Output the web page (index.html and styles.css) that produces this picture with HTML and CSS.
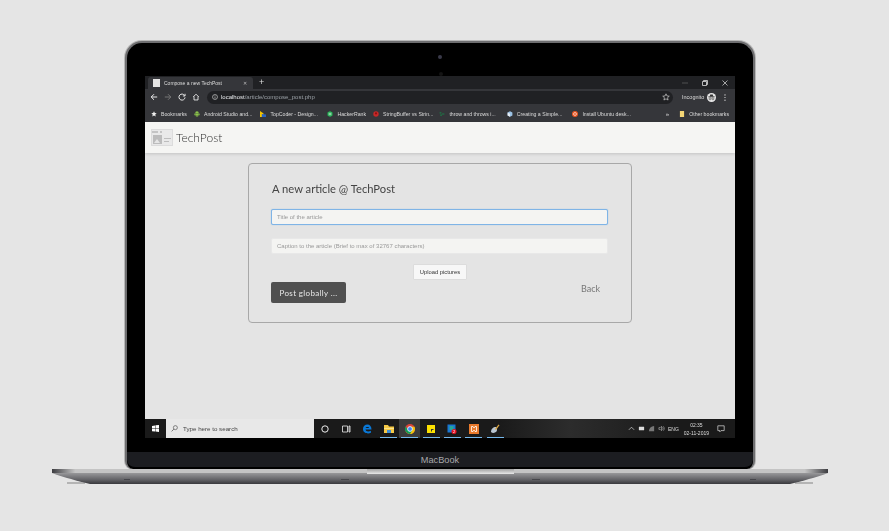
FILE: index.html
```html
<!DOCTYPE html>
<html lang="en">
<head>
  <meta charset="UTF-8">
  <title>Compose a new TechPost</title>
  <link rel="stylesheet" href="styles.css">
</head>
<body>
  <div class="lid">
    <div class="camera"></div>
    <div class="screen">

      <div class="tabstrip">
        <div class="tab">
          <span class="tab-favicon"></span>
          <span class="tab-title">Compose a new TechPost</span>
          <span class="tab-close">✕</span>
        </div>
        <span class="tab-new">+</span>
        <div class="window-btns">
          <svg width="6" height="6" viewBox="0 0 6 6"><path d="M0 3h6" stroke="#666" stroke-width=".7"/></svg>
          <svg width="6" height="6" viewBox="0 0 6 6"><path d="M.5 1.500h4v4h-4zM1.500 1.500v-1h4v4h-1" fill="none" stroke="#ddd" stroke-width=".8"/></svg>
          <svg width="6" height="6" viewBox="0 0 6 6"><path d="M.5.5l5 5M5.500.5l-5 5" stroke="#ddd" stroke-width=".7"/></svg>
        </div>
      </div>

      <div class="toolbar">
        <svg class="nav-icon" viewBox="0 0 10 10"><path d="M9 5H1.500M5 1.500L1.500 5 5 8.500" fill="none" stroke="#eee" stroke-width="1.200"/></svg>
        <svg class="nav-icon" viewBox="0 0 10 10"><path d="M1 5h7.500M5 1.500L8.500 5 5 8.500" fill="none" stroke="#777" stroke-width="1.200"/></svg>
        <svg class="nav-icon" viewBox="0 0 10 10"><path d="M8.300 3.200A3.800 3.800 0 1 0 8.800 5.500M8.800 1v2.700H6.100" fill="none" stroke="#eee" stroke-width="1.200"/></svg>
        <svg class="nav-icon" viewBox="0 0 10 10"><path d="M1.500 5L5 1.500 8.500 5M2.500 4.500v4.200h5V4.500" fill="none" stroke="#eee" stroke-width="1.100"/></svg>
        <div class="omnibox">
          <svg class="info-icon" viewBox="0 0 8 8"><circle cx="4" cy="4" r="3.300" fill="none" stroke="#ddd" stroke-width=".8"/><path d="M4 3.500v2.500M4 2v1" stroke="#ddd" stroke-width=".8"/></svg>
          <span class="url"><b>localhost</b>/article/compose_post.php</span>
          <svg class="star-icon" viewBox="0 0 10 10"><path d="M5 1l1.200 2.700 2.900.3-2.200 1.900.7 2.900L5 7.300 2.400 8.800l.7-2.900L.9 4l2.900-.3z" fill="none" stroke="#ddd" stroke-width=".8"/></svg>
        </div>
        <span class="incognito">Incognito</span>
        <svg class="incognito-icon" viewBox="0 0 10 10"><circle cx="5" cy="5" r="5" fill="#e8e8e8"/><path d="M1.500 4.300h7" stroke="#333" stroke-width="1"/><path d="M3 3.800l.6-2h2.800l.6 2z" fill="#333"/><circle cx="3.400" cy="6.500" r="1.100" fill="none" stroke="#333" stroke-width=".6"/><circle cx="6.600" cy="6.500" r="1.100" fill="none" stroke="#333" stroke-width=".6"/></svg>
        <svg class="menu-icon" viewBox="0 0 2 8"><circle cx="1" cy="1" r=".7" fill="#eee"/><circle cx="1" cy="4" r=".7" fill="#eee"/><circle cx="1" cy="7" r=".7" fill="#eee"/></svg>
      </div>

      <div class="bookmarks">
        <span class="mark"><svg viewBox="0 0 10 10"><path d="M5 .5l1.400 3 3.100.3-2.400 2.100.8 3.200L5 7.400 2.100 9.100l.8-3.200L.5 3.800l3.100-.3z" fill="#eee"/></svg>Bookmarks</span>
        <span class="mark mark-android"><svg viewBox="0 0 10 10"><path d="M2 4h6v3.500H2z" fill="#8bc34a"/><path d="M2 3.600a3 3 0 0 1 6 0z" fill="#8bc34a"/><path d="M3.200 7h1.200v2.500H3.200zM5.600 7h1.200v2.500H5.600zM.6 4h1v3h-1zM8.400 4h1v3h-1z" fill="#8bc34a"/></svg>Android Studio and...</span>
        <span class="mark mark-tc"><svg viewBox="0 0 10 10"><path d="M0 0l6 4v6H0z" fill="#f5c400"/><path d="M3 5l7 1v4H3z" fill="#2a63c4"/></svg>TopCoder - Design...</span>
        <span class="mark mark-hr"><svg viewBox="0 0 10 10"><path d="M5 0l4.300 2.500v5L5 10 .7 7.500v-5z" fill="#1ba94c"/><path d="M3.500 2.500v5M6.500 2.500v5M3.500 5h3" stroke="#fff" stroke-width=".9"/></svg>HackerRank</span>
        <span class="mark mark-sb"><svg viewBox="0 0 10 10"><circle cx="5" cy="5" r="4.500" fill="#c62828"/><circle cx="5" cy="4" r="1.800" fill="#8d1010"/></svg>StringBuffer vs Strin...</span>
        <span class="mark mark-th"><svg viewBox="0 0 10 10"><path d="M1 2h3v2H1zM5 4h4v2H5zM2 6h3v2H2z" fill="#1d7a46"/></svg>throw and throws i...</span>
        <span class="mark mark-cs"><svg viewBox="0 0 10 10"><path d="M5 .5l4 2v5l-4 2-4-2v-5z" fill="#9cc3e6"/><path d="M5 4.500v5L1 7.500v-5z" fill="#e6eef6"/></svg>Creating a Simple...</span>
        <span class="mark mark-ub"><svg viewBox="0 0 10 10"><circle cx="5" cy="5" r="5" fill="#e95420"/><circle cx="5" cy="5" r="2.400" fill="none" stroke="#fff" stroke-width="1"/></svg>Install Ubuntu desk...</span>
        <span class="more">»</span>
        <span class="mark mark-other"><svg viewBox="0 0 10 10"><path d="M1.500 0h7v10h-7z" fill="#f4d676"/></svg>Other bookmarks</span>
      </div>

      <header class="site-nav">
        <svg class="site-logo" viewBox="0 0 22 17">
          <path d="M0 0h22v17H0z" fill="#dcdcdc"/>
          <path d="M1 1h20v15H1z" fill="#e9e9e9"/>
          <path d="M1 2h6v2H1zM9 2h2v2H9z" fill="#c4c4c4"/>
          <path d="M2 6h9v9H2z" fill="#bcbcbc"/>
          <path d="M3 14l3-4 3 4z" fill="#e6e6e6"/>
          <path d="M13 9h7v1h-7zM13 12h5v1h-5z" fill="#bdbdbd"/>
        </svg>
        <span class="site-name">TechPost</span>
      </header>

      <main class="content">
        <form class="compose-card">
          <h1>A new article @ TechPost</h1>
          <input class="field field-focus" type="text" placeholder="Title of the article">
          <input class="field" type="text" placeholder="Caption to the article (Brief to max of 32767 characters)">
          <div class="upload-row"><button class="btn-upload" type="button">Upload pictures</button></div>
          <div class="action-row">
            <button class="btn-post" type="button">Post globally ...</button>
            <a class="back-link">Back</a>
          </div>
        </form>
      </main>

      <footer class="taskbar">
        <svg class="win-logo" viewBox="0 0 8 8"><path d="M0 1l3.500-.5v3.200H0zM4 .4L8 0v3.700H4zM0 4.300h3.500v3.200L0 7zM4 4.300h4V8l-4-.5z" fill="#fff"/></svg>
        <div class="search">
          <svg viewBox="0 0 8 8"><circle cx="5" cy="3" r="2.300" fill="none" stroke="#444" stroke-width=".7"/><path d="M3.300 4.700L.7 7.300" stroke="#444" stroke-width=".8"/></svg>
          Type here to search
        </div>
        <div class="task-slot"><svg viewBox="0 0 10 10"><circle cx="5" cy="5" r="3.200" fill="none" stroke="#eee" stroke-width="1"/></svg></div>
        <div class="task-slot"><svg viewBox="0 0 10 10"><path d="M1.500 2h5v6h-5zM8 2h1v6H8z" fill="none" stroke="#eee" stroke-width=".8"/></svg></div>
        <div class="task-slot"><svg viewBox="0 0 10 10"><path d="M1 5C1 2 3 .5 5.300.5 8 .5 9.500 2.500 9.500 5.500H3.500c.2 2 3 2.600 5.400 1.200v2.100C5.500 10.300 1 9 1 5zM3.600 4h3.500C7 2.700 4 2.600 3.600 4z" fill="#0a78d7"/></svg></div>
        <div class="task-slot task-open"><svg viewBox="0 0 10 10"><path d="M0 1h4l1 1.500h5V9H0z" fill="#f6c945"/><path d="M0 4h10v1H0z" fill="#fbe38c"/><path d="M3 6h4v3H3z" fill="#3c8fd8"/></svg></div>
        <div class="task-slot task-open task-active"><svg viewBox="0 0 10 10"><circle cx="5" cy="5" r="5" fill="#db4437"/><path d="M5 5L.7 7.500A5 5 0 0 0 5 10a5 5 0 0 0 4.500-7.200H5z" fill="#f4c20d"/><path d="M.7 2.400A5 5 0 0 0 .7 7.500 5 5 0 0 0 5 10l2.200-3.700H3z" fill="#0f9d58"/><circle cx="5" cy="5" r="2.400" fill="#4285f4" stroke="#fff" stroke-width=".8"/></svg></div>
        <div class="task-slot task-open"><svg viewBox="0 0 10 10"><path d="M1 1h8v8H1z" fill="#fce100"/><path d="M5 5h2.500v1H6v1.500H5z" fill="#333"/></svg></div>
        <div class="task-slot task-open"><svg viewBox="0 0 10 10"><path d="M.5 .5h8v8h-8z" fill="#1976d2"/><path d="M2.500 2h4v4h-4z" fill="#26a69a"/><circle cx="7" cy="7.500" r="2.500" fill="#e81123"/><text x="7" y="9" class="badge-num">2</text></svg></div>
        <div class="task-slot task-open"><svg viewBox="0 0 10 10"><path d="M0 0h10v10H0z" fill="#e8792b"/><path d="M2.500 2.500h1.500l1 1.500 1-1.500h1.500v5H6L5 6 4 7.500H2.500z" fill="none" stroke="#fff" stroke-width=".8"/></svg></div>
        <div class="task-slot task-open"><svg viewBox="0 0 10 10"><path d="M1 8c0-3 2-5 5-5 1 1 1.500 3 .5 4.500C5 9 2.500 9.500 1 8z" fill="#b9c6d2"/><path d="M5 5l3.500-4.500 1 .8L6 6z" fill="#d9a441"/></svg></div>
        <div class="tray">
          <svg viewBox="0 0 8 8"><path d="M1 5.500L4 2.500l3 3" fill="none" stroke="#ddd" stroke-width=".8"/></svg>
          <svg viewBox="0 0 8 8"><path d="M1 2h6v4H1z" fill="#ddd"/></svg>
          <svg viewBox="0 0 8 8"><path d="M1 7a6 6 0 0 1 6-6v6z" fill="#777"/></svg>
          <svg viewBox="0 0 8 8"><path d="M1 3h1.500L4 1.500v5L2.500 5H1zM5 2.500c1 1 1 2 0 3M6 1.500c1.500 1.500 1.500 3.500 0 5" fill="none" stroke="#ccc" stroke-width=".6"/></svg>
          <span class="tray-lang">ENG</span>
          <span class="tray-clock">02:35<br>02-11-2019</span>
          <svg class="tray-note" viewBox="0 0 10 10"><path d="M1 1h8v6H5L3.500 8.500V7H1z" fill="none" stroke="#eee" stroke-width=".8"/></svg>
        </div>
      </footer>
    </div>
    <div class="chin">MacBook</div>
  </div>

  <svg class="base" viewBox="0 0 776 16" preserveAspectRatio="none">
    <defs>
      <linearGradient id="topEdge" x1="0" x2="1" y1="0" y2="0">
        <stop offset="0" stop-color="#3c3c40"/>
        <stop offset=".03" stop-color="#c4c4c4"/>
        <stop offset=".97" stop-color="#c4c4c4"/>
        <stop offset="1" stop-color="#3c3c40"/>
      </linearGradient>
      <linearGradient id="bottomBody" x1="0" x2="0" y1="0" y2="1">
        <stop offset="0" stop-color="#98989a"/>
        <stop offset=".6" stop-color="#636367"/>
        <stop offset="1" stop-color="#38383c"/>
      </linearGradient>
      <linearGradient id="notch" x1="0" x2="0" y1="0" y2="1">
        <stop offset="0" stop-color="#a0a0a0"/>
        <stop offset="1" stop-color="#e8e8e8"/>
      </linearGradient>
    </defs>
    <path d="M15 13h18v2H15zM743 13h18v2h-18z" fill="#b4b4b4"/>
    <path d="M0 0h776v4H0z" fill="url(#topEdge)"/>
    <path d="M0 4h776c-8 3-22 7-30 9l-8 2H38l-8-2C22 11 8 7 0 4z" fill="url(#bottomBody)"/>
    <path d="M315 0h147v5H315z" fill="url(#notch)"/>
    <path d="M72 10h6v1h-6zM289 10h8v1h-8zM480 10h8v1h-8zM698 10h6v1h-6z" fill="#45454a"/>
  </svg>
</body>
</html>
```
FILE: styles.css
```css
* {
  box-sizing: border-box;
}
body {
  margin: 0;
  height: 531px;
  overflow: hidden;
  background: #e5e5e5;
  font-family: "Liberation Sans", Arial, sans-serif;
  padding-top: 41px;
}

/* laptop frame */
.lid {
  width: 630px;
  height: 428px;
  margin-left: 125px;
  background: #000;
  border: 2px solid #6e6e70;
  border-bottom: 0;
  border-radius: 17px 17px 8px 8px;
  box-shadow: 0 0 0 1px #b8b8b8;
  display: flex;
  flex-direction: column;
  align-items: center;
}
.camera {
  width: 4px;
  height: 4px;
  margin: 12px 0 17px;
  border-radius: 50%;
  background: #3a3a4a;
  box-shadow: 1px 17px 0 0 #141414;
}
.screen {
  width: 590px;
  height: 362px;
  display: flex;
  flex-direction: column;
  background: #e4e4e4;
  overflow: hidden;
  filter: blur(0.3px);
}
.chin {
  width: 100%;
  height: 16px;
  margin-top: 14px;
  background: #1c1d21;
  border-bottom: 1px solid #000;
  border-radius: 0 0 8px 8px;
  color: #a9a9ab;
  font-size: 9.200px;
  line-height: 16px;
  text-align: center;
}
.base {
  display: block;
  width: 776px;
  height: 16px;
  margin-left: 52px;
}

/* browser tabs */
.tabstrip {
  height: 13px;
  background: #202124;
  display: flex;
  align-items: flex-end;
  color: #dcdcdc;
  font-size: 5px;
}
.tab {
  width: 105px;
  height: 12px;
  margin-left: 3px;
  padding: 0 6px 0 5px;
  background: #35363a;
  border-radius: 3px 3px 0 0;
  display: flex;
  align-items: center;
}
.tab-favicon {
  width: 7px;
  height: 8px;
  margin-right: 4px;
  background: #e4e4e4;
}
.tab-title {
  flex: 1;
}
.tab-close {
  font-size: 5px;
  color: #bbb;
}
.tab-new {
  margin-left: 6px;
  align-self: center;
  font-size: 9px;
  line-height: 13px;
}
.window-btns {
  margin-left: auto;
  align-self: center;
  padding-right: 7px;
  display: flex;
  gap: 14px;
}

/* address bar */
.toolbar {
  height: 16px;
  background: #35363a;
  display: flex;
  align-items: center;
  padding-left: 5px;
}
.nav-icon {
  width: 8px;
  height: 8px;
  margin-right: 6px;
}
.omnibox {
  width: 466px;
  height: 13px;
  margin-left: 1px;
  padding: 0 3px 0 5px;
  background: #202124;
  border-radius: 7px;
  display: flex;
  align-items: center;
  color: #9aa0a6;
  font-size: 6px;
}
.url b {
  font-weight: normal;
  color: #e8eaed;
}
.info-icon {
  width: 6px;
  height: 6px;
  margin-right: 3px;
}
.star-icon {
  width: 8px;
  height: 8px;
  margin-left: auto;
}
.incognito {
  margin-left: 9px;
  font-size: 5.500px;
  color: #dcdcdc;
}
.incognito-icon {
  width: 9px;
  height: 9px;
  margin-left: 3px;
}
.menu-icon {
  width: 2px;
  height: 7px;
  margin-left: 8px;
}

/* bookmarks */
.bookmarks {
  height: 17px;
  padding-left: 6px;
  background: #35363a;
  display: flex;
  align-items: center;
  color: #dcdcdc;
  font-size: 5.200px;
  white-space: nowrap;
}
.mark {
  display: flex;
  align-items: center;
  gap: 4px;
}
.mark svg {
  width: 6px;
  height: 6px;
  flex: none;
}
.mark-android { margin-left: 7px; }
.mark-tc { margin-left: 8px; }
.mark-hr { margin-left: 9.500px; }
.mark-sb { margin-left: 7px; }
.mark-th { margin-left: 6px; }
.mark-cs { margin-left: 11px; }
.mark-ub { margin-left: 10px; }
.more {
  margin-left: auto;
  font-size: 6px;
}
.mark-other {
  margin: 0 6px 0 10px;
}

/* site header */
.site-nav {
  height: 31px;
  padding-left: 6px;
  background: #f5f5f3;
  box-shadow: 0 1px 3px rgba(0, 0, 0, 0.15);
  display: flex;
  align-items: center;
  gap: 3px;
}
.site-logo {
  width: 22px;
  height: 17px;
}
.site-name {
  font-family: Lato, sans-serif;
  font-size: 12px;
  font-weight: 300;
  color: #333;
}

/* compose form */
.content {
  flex: 1;
  padding: 10px 0 0 103px;
}
.compose-card {
  width: 384px;
  height: 160px;
  padding: 0 22px;
  border: 1px solid #a8a8a8;
  border-radius: 4px;
}
.compose-card h1 {
  margin: 17px 0 13px 1px;
  font-family: Lato, sans-serif;
  font-size: 11.200px;
  font-weight: normal;
  line-height: 15px;
  color: #444;
}
.field {
  display: block;
  width: 337px;
  height: 16px;
  margin-bottom: 13px;
  padding: 0 5px;
  background: #f4f4f2;
  border: 1px solid #e8e8e8;
  border-radius: 2px;
  font-family: "Liberation Sans", sans-serif;
  font-size: 6px;
}
.field::placeholder {
  color: #999;
}
.field-focus {
  border-color: #7fb4e6;
  box-shadow: 0 0 1px #7fb4e6;
}
.upload-row {
  margin-top: -3px;
  display: flex;
  justify-content: center;
}
.btn-upload {
  width: 54px;
  height: 16px;
  padding: 0;
  background: #f7f7f7;
  border: 1px solid #dcdcdc;
  border-radius: 1px;
  font-family: "Liberation Sans", sans-serif;
  font-size: 5.800px;
  color: #333;
}
.action-row {
  margin-top: 2px;
  display: flex;
  justify-content: space-between;
}
.btn-post {
  width: 75px;
  height: 21px;
  padding: 0;
  background: #505050;
  border: 0;
  border-radius: 2px;
  font-family: Lato, sans-serif;
  font-size: 8px;
  letter-spacing: 0.350px;
  color: #e8e8e8;
}
.back-link {
  margin: 1px 9px 0 0;
  font-family: Lato, sans-serif;
  font-size: 9px;
  color: #777;
}

/* windows taskbar */
.taskbar {
  height: 19px;
  background: linear-gradient(90deg, #1a1a1a 60%, #2c2c2c 72%, #1a1a1a 90%);
  display: flex;
  align-items: center;
  color: #ddd;
}
.win-logo {
  width: 7px;
  height: 7px;
  margin: 0 7px 0 7px;
}
.search {
  width: 148px;
  height: 19px;
  padding-left: 5px;
  background: #e8e8e8;
  display: flex;
  align-items: center;
  gap: 5px;
  color: #444;
  font-size: 6.200px;
}
.search svg {
  width: 7px;
  height: 7px;
}
.task-slot {
  width: 21.300px;
  height: 19px;
  display: flex;
  align-items: center;
  justify-content: center;
}
.task-slot svg {
  width: 10px;
  height: 10px;
}
.task-open {
  background: linear-gradient(#76b9ed, #76b9ed) center bottom / 17px 1px no-repeat;
}
.task-active {
  background-color: #3c3c3c;
}
.badge-num {
  font-size: 4px;
  fill: #fff;
  text-anchor: middle;
}
.tray {
  margin-left: auto;
  padding-right: 10px;
  display: flex;
  align-items: center;
  gap: 3px;
}
.tray svg {
  width: 7px;
  height: 7px;
}
.tray-lang {
  font-size: 5px;
}
.tray-clock {
  margin-left: 2px;
  font-size: 5px;
  line-height: 8px;
  text-align: center;
}
.tray .tray-note {
  width: 8px;
  height: 8px;
  margin-left: 5px;
}
```
